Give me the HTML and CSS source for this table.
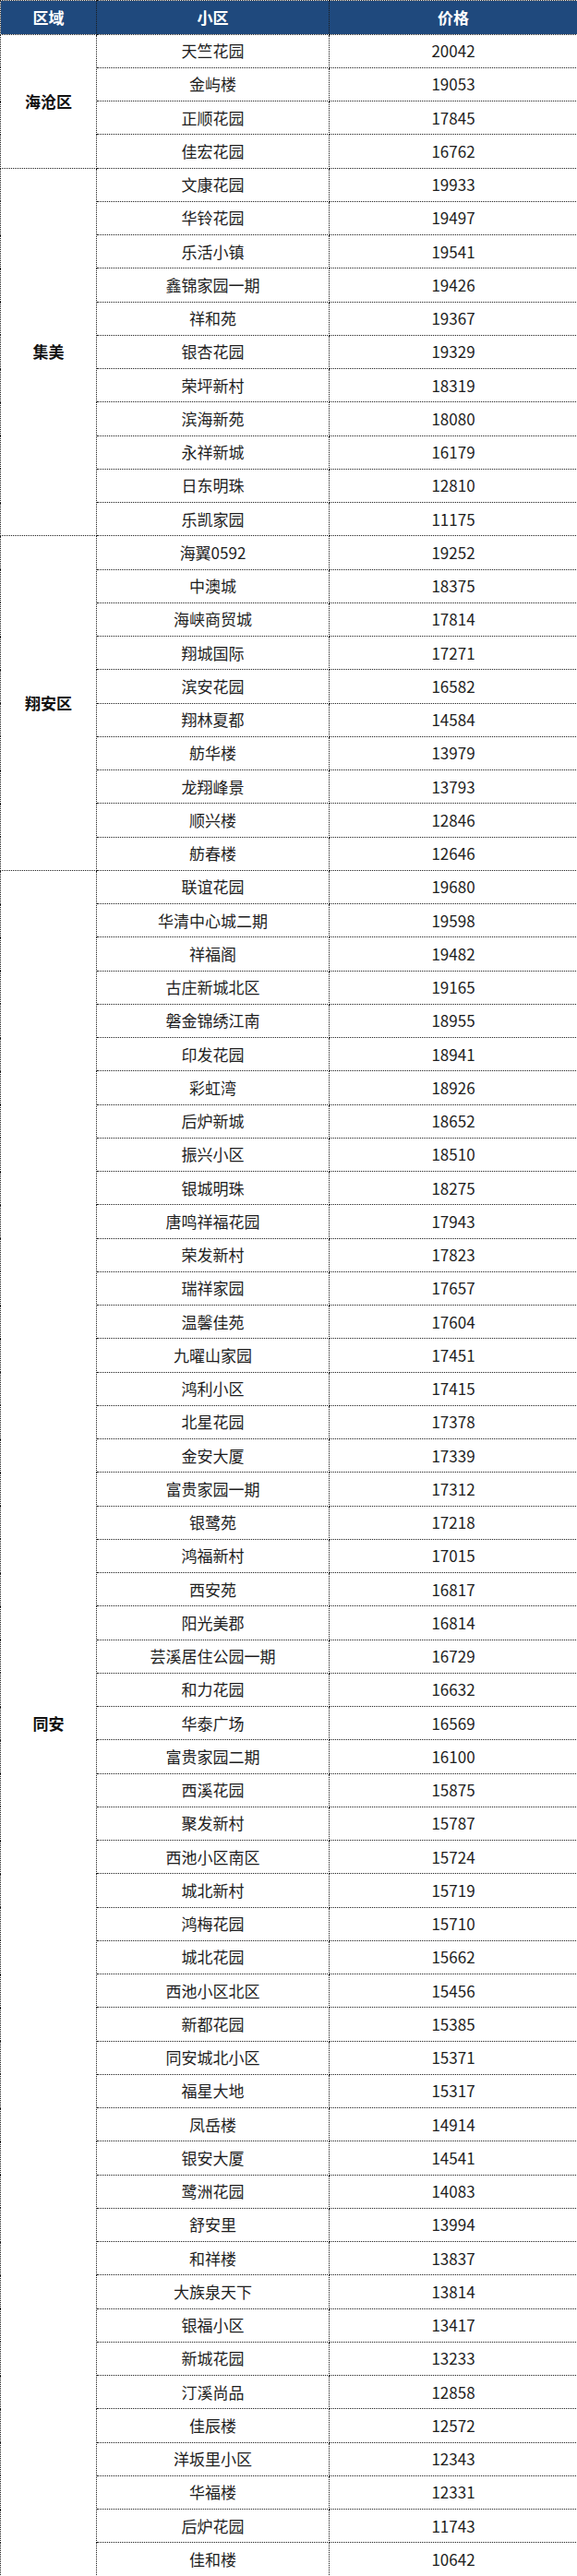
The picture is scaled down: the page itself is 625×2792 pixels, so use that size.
FILE: index.html
```html
<!DOCTYPE html>
<html lang="zh-CN">
<head>
<meta charset="utf-8">
<title>房价表</title>
<link rel="stylesheet" href="styles.css">
</head>
<body>
<table class="price-table">
  <colgroup>
    <col class="col-area">
    <col class="col-name">
    <col class="col-price">
  </colgroup>
  <thead>
    <tr class="head-row"><th>区域</th><th>小区</th><th>价格</th></tr>
  </thead>
  <tbody>
    <tr><td class="area" rowspan="4">海沧区</td><td>天竺花园</td><td>20042</td></tr>
    <tr><td>金屿楼</td><td>19053</td></tr>
    <tr><td>正顺花园</td><td>17845</td></tr>
    <tr><td>佳宏花园</td><td>16762</td></tr>

    <tr><td class="area" rowspan="11">集美</td><td>文康花园</td><td>19933</td></tr>
    <tr><td>华铃花园</td><td>19497</td></tr>
    <tr><td>乐活小镇</td><td>19541</td></tr>
    <tr><td>鑫锦家园一期</td><td>19426</td></tr>
    <tr><td>祥和苑</td><td>19367</td></tr>
    <tr><td>银杏花园</td><td>19329</td></tr>
    <tr><td>荣坪新村</td><td>18319</td></tr>
    <tr><td>滨海新苑</td><td>18080</td></tr>
    <tr><td>永祥新城</td><td>16179</td></tr>
    <tr><td>日东明珠</td><td>12810</td></tr>
    <tr><td>乐凯家园</td><td>11175</td></tr>

    <tr><td class="area" rowspan="10">翔安区</td><td>海翼0592</td><td>19252</td></tr>
    <tr><td>中澳城</td><td>18375</td></tr>
    <tr><td>海峡商贸城</td><td>17814</td></tr>
    <tr><td>翔城国际</td><td>17271</td></tr>
    <tr><td>滨安花园</td><td>16582</td></tr>
    <tr><td>翔林夏都</td><td>14584</td></tr>
    <tr><td>舫华楼</td><td>13979</td></tr>
    <tr><td>龙翔峰景</td><td>13793</td></tr>
    <tr><td>顺兴楼</td><td>12846</td></tr>
    <tr><td>舫春楼</td><td>12646</td></tr>

    <tr><td class="area" rowspan="51">同安</td><td>联谊花园</td><td>19680</td></tr>
    <tr><td>华清中心城二期</td><td>19598</td></tr>
    <tr><td>祥福阁</td><td>19482</td></tr>
    <tr><td>古庄新城北区</td><td>19165</td></tr>
    <tr><td>磐金锦绣江南</td><td>18955</td></tr>
    <tr><td>印发花园</td><td>18941</td></tr>
    <tr><td>彩虹湾</td><td>18926</td></tr>
    <tr><td>后炉新城</td><td>18652</td></tr>
    <tr><td>振兴小区</td><td>18510</td></tr>
    <tr><td>银城明珠</td><td>18275</td></tr>
    <tr><td>唐鸣祥福花园</td><td>17943</td></tr>
    <tr><td>荣发新村</td><td>17823</td></tr>
    <tr><td>瑞祥家园</td><td>17657</td></tr>
    <tr><td>温馨佳苑</td><td>17604</td></tr>
    <tr><td>九曜山家园</td><td>17451</td></tr>
    <tr><td>鸿利小区</td><td>17415</td></tr>
    <tr><td>北星花园</td><td>17378</td></tr>
    <tr><td>金安大厦</td><td>17339</td></tr>
    <tr><td>富贵家园一期</td><td>17312</td></tr>
    <tr><td>银鹭苑</td><td>17218</td></tr>
    <tr><td>鸿福新村</td><td>17015</td></tr>
    <tr><td>西安苑</td><td>16817</td></tr>
    <tr><td>阳光美郡</td><td>16814</td></tr>
    <tr><td>芸溪居住公园一期</td><td>16729</td></tr>
    <tr><td>和力花园</td><td>16632</td></tr>
    <tr><td>华泰广场</td><td>16569</td></tr>
    <tr><td>富贵家园二期</td><td>16100</td></tr>
    <tr><td>西溪花园</td><td>15875</td></tr>
    <tr><td>聚发新村</td><td>15787</td></tr>
    <tr><td>西池小区南区</td><td>15724</td></tr>
    <tr><td>城北新村</td><td>15719</td></tr>
    <tr><td>鸿梅花园</td><td>15710</td></tr>
    <tr><td>城北花园</td><td>15662</td></tr>
    <tr><td>西池小区北区</td><td>15456</td></tr>
    <tr><td>新都花园</td><td>15385</td></tr>
    <tr><td>同安城北小区</td><td>15371</td></tr>
    <tr><td>福星大地</td><td>15317</td></tr>
    <tr><td>凤岳楼</td><td>14914</td></tr>
    <tr><td>银安大厦</td><td>14541</td></tr>
    <tr><td>鹭洲花园</td><td>14083</td></tr>
    <tr><td>舒安里</td><td>13994</td></tr>
    <tr><td>和祥楼</td><td>13837</td></tr>
    <tr><td>大族泉天下</td><td>13814</td></tr>
    <tr><td>银福小区</td><td>13417</td></tr>
    <tr><td>新城花园</td><td>13233</td></tr>
    <tr><td>汀溪尚品</td><td>12858</td></tr>
    <tr><td>佳辰楼</td><td>12572</td></tr>
    <tr><td>洋坂里小区</td><td>12343</td></tr>
    <tr><td>华福楼</td><td>12331</td></tr>
    <tr><td>后炉花园</td><td>11743</td></tr>
    <tr><td>佳和楼</td><td>10642</td></tr>
  </tbody>
</table>
</body>
</html>
```

FILE: styles.css
```css
html, body {
  margin: 0;
  padding: 0;
  background: #ffffff;
}

.price-table {
  width: 625px;
  border-collapse: collapse;
  table-layout: fixed;
  font-family: "Noto Sans CJK SC", "Noto Sans", sans-serif;
  font-size: 17px;
  color: #1e1e1e;
}

.col-area { width: 104px; }
.col-name { width: 252px; }
.col-price { width: 269px; }

.price-table th,
.price-table td {
  border: 1px dotted #1a1a1a;
  padding: 0;
  text-align: center;
  vertical-align: middle;
  line-height: 20px;
}

.head-row {
  height: 36.5px;
}

.head-row th {
  background: #1f497d;
  color: #ffffff;
  font-weight: bold;
}

.price-table tbody tr {
  height: 36.25px;
}

.price-table td.area {
  font-weight: bold;
  color: #111111;
}
```
